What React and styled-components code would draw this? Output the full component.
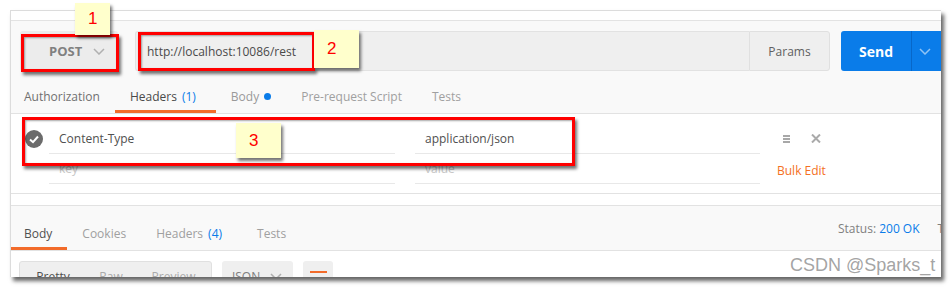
import React from "react";
import styled, { createGlobalStyle } from "styled-components";

const GlobalStyle = createGlobalStyle`
  html, body {
    margin: 0;
    padding: 0;
    background: #fff;
  }
  body {
    font-family: "Open Sans", "Liberation Sans", sans-serif;
  }
`;

const Stage = styled.div`
  position: relative;
  width: 952px;
  height: 288px;
  box-sizing: border-box;
  padding: 10px 0 0 10px;
  background: #fff;
  overflow: hidden;
`;

const Frame = styled.div`
  width: 931px;
  height: 267px;
  box-sizing: border-box;
  border-top: 1px solid #dcdcdc;
  border-left: 1px solid #dcdcdc;
  background: #fff;
  overflow: hidden;
  box-shadow: 3px 4px 4px rgba(0, 0, 0, 0.6);
  display: flex;
  flex-direction: column;
  > * {
    flex-shrink: 0;
  }
`;

const TopStrip = styled.div`
  height: 9px;
  background: #fff;
  border-bottom: 1px solid #e3e3e3;
`;

const RequestArea = styled.div`
  background: #f9f9f9;
  padding-top: 10px;
`;

const Bar = styled.div`
  display: flex;
  height: 40px;
  width: 1000px;
  margin-left: 9px;
`;

const MethodButton = styled.div`
  width: 98px;
  box-sizing: border-box;
  display: flex;
  align-items: center;
  padding-left: 29px;
  background: #ececec;
  border-radius: 3px;
  font-weight: 700;
  font-size: 13px;
  color: #808080;
  svg {
    margin-left: 11px;
  }
`;

const UrlField = styled.div`
  width: 614px;
  margin-left: 17px;
  box-sizing: border-box;
  display: flex;
  align-items: center;
  padding-left: 11px;
  background: #efefef;
  border: 1px solid #e2e2e2;
  border-right: none;
  border-radius: 3px 0 0 3px;
  font-size: 12px;
  color: #4a4a4a;
`;

const ParamsButton = styled.div`
  width: 81px;
  box-sizing: border-box;
  display: flex;
  align-items: center;
  justify-content: center;
  background: #efefef;
  border: 1px solid #e0e0e0;
  border-radius: 0 3px 3px 0;
  font-size: 12px;
  color: #606060;
`;

const SendGroup = styled.div`
  margin-left: 11px;
  display: flex;
  background: #0a7ce9;
  border-radius: 3px;
  width: 110px;
`;

const SendLabel = styled.div`
  width: 70px;
  display: flex;
  align-items: center;
  justify-content: center;
  color: #fff;
  font-weight: 700;
  font-size: 14px;
  border-right: 1px solid #0767c9;
`;

const SendCaret = styled.div`
  display: flex;
  align-items: center;
  padding-left: 7px;
`;

const TabRow = styled.div`
  display: flex;
  height: ${(p) => p.$h}px;
  border-bottom: 1px solid #e2e2e2;
`;

const Tab = styled.div`
  height: 100%;
  box-sizing: border-box;
  display: flex;
  align-items: center;
  gap: 5px;
  padding: ${(p) => p.$pt}px ${(p) => p.$pr || 15}px 0 15px;
  font-size: 12px;
  white-space: nowrap;
  color: ${(p) => p.$color || "#a0a0a0"};
  border-bottom: 3px solid ${(p) => (p.$active ? "#f26b2a" : "transparent")};
  &:first-child {
    padding-left: 13px;
  }
`;

const Count = styled.span`
  color: #0a7ce9;
`;

const Dot = styled.span`
  width: 7px;
  height: 7px;
  border-radius: 50%;
  background: #0a7ce9;
`;

const HeaderTable = styled.div`
  background: #fff;
  padding-bottom: 9px;
  border-bottom: 1px solid #e2e2e2;
`;

const HeaderRow = styled.div`
  display: grid;
  grid-template-columns: 38px 346px 20px 345px 1fr;
  height: ${(p) => p.$h}px;
`;

const CheckCell = styled.div`
  display: flex;
  align-items: flex-end;
  padding: 0 0 6px 14px;
`;

const Cell = styled.div`
  box-sizing: border-box;
  display: flex;
  align-items: flex-end;
  padding: 0 0 6px 10px;
  border-bottom: 1px solid #e8e8e8;
  font-size: 12px;
  line-height: 16px;
  color: ${(p) => (p.$placeholder ? "#c8c8c8" : "#505050")};
`;

const ActionCell = styled.div`
  display: flex;
  align-items: flex-end;
  gap: 21px;
  padding: 0 0 ${(p) => p.$pb}px ${(p) => p.$pl}px;
  font-size: 12px;
  line-height: 16px;
  color: #f47023;
`;

const Divider = styled.div`
  height: 11px;
  background: #fff;
  border-bottom: 1px solid #e2e2e2;
`;

const ResponseHead = styled.div`
  display: flex;
  height: 44px;
  width: 1010px;
  background: #f9f9f9;
  border-bottom: 1px solid #e2e2e2;
`;

const ResponseTabs = styled.div`
  display: flex;
  height: 100%;
`;

const Status = styled.div`
  margin-left: auto;
  display: flex;
  align-items: center;
  gap: 18px;
  padding: 0 16px 0 0;
  font-size: 12px;
  color: #808080;
  white-space: nowrap;
  b {
    font-weight: 400;
    color: #0a7ce9;
  }
`;

const ResponseBody = styled.div`
  background: #fff;
  padding: 10px 0 0 8px;
  display: flex;
  gap: 10px;
`;

const Segmented = styled.div`
  width: 193px;
  height: 30px;
  box-sizing: border-box;
  display: flex;
  align-items: center;
  background: #efefef;
  border: 1px solid #e0e0e0;
  border-radius: 3px;
  font-size: 12px;
`;

const Seg = styled.span`
  width: ${(p) => p.$w}px;
  text-align: center;
  color: ${(p) => (p.$on ? "#505050" : "#aaa")};
`;

const Dropdown = styled.div`
  width: 71px;
  height: 30px;
  box-sizing: border-box;
  display: flex;
  align-items: center;
  gap: 10px;
  padding-left: 10px;
  background: #efefef;
  border-radius: 3px;
  font-size: 12px;
  color: #808080;
`;

const WrapButton = styled.div`
  width: 30px;
  height: 30px;
  display: flex;
  justify-content: center;
  padding-top: 10px;
  box-sizing: border-box;
  background: #efefef;
  border-radius: 3px;
`;

const Mark = styled.div`
  position: absolute;
  left: ${(p) => p.$x}px;
  top: ${(p) => p.$y}px;
  width: ${(p) => p.$w}px;
  height: ${(p) => p.$h}px;
  box-sizing: border-box;
  border: 3px solid #ff0000;
  box-shadow: 2px 3px 3px rgba(0, 0, 0, 0.55), inset 1px 1px 2px rgba(0, 0, 0, 0.35);
`;

const Label = styled.div`
  position: absolute;
  left: ${(p) => p.$x}px;
  top: ${(p) => p.$y}px;
  width: ${(p) => p.$w}px;
  height: ${(p) => p.$h}px;
  box-sizing: border-box;
  display: flex;
  align-items: center;
  padding-left: 13px;
  background: #ffffcc;
  box-shadow: 2px 3px 3px rgba(0, 0, 0, 0.55);
  font-family: "Liberation Sans", Arial, sans-serif;
  font-size: 17px;
  color: #ff0000;
`;

const Watermark = styled.div`
  position: absolute;
  left: 790px;
  top: 254px;
  font-family: "Liberation Sans", Arial, sans-serif;
  font-size: 18px;
  line-height: 22px;
  color: rgba(140, 140, 140, 0.8);
  text-shadow: 0 0 2px #fff;
  white-space: nowrap;
`;

const Chevron = ({ color = "#b0b0b0" }) => (
  <svg width="12" height="7" viewBox="0 0 12 7">
    <polyline points="1,1 6,6 11,1" fill="none" stroke={color} strokeWidth="1.5" />
  </svg>
);

const CheckIcon = () => (
  <svg width="18" height="18" viewBox="0 0 18 18">
    <circle cx="9" cy="9" r="9" fill="#6b6b6b" />
    <polyline points="5,9.5 8,12.2 13,6.5" fill="none" stroke="#fff" strokeWidth="2" />
  </svg>
);

const MenuIcon = () => (
  <svg width="7" height="8" viewBox="0 0 7 8">
    <rect x="0" y="0" width="7" height="2" fill="#a8a8a8" />
    <rect x="0" y="3" width="7" height="2" fill="#a8a8a8" />
    <rect x="0" y="6" width="7" height="2" fill="#a8a8a8" />
  </svg>
);

const CloseIcon = () => (
  <svg width="10" height="9" viewBox="0 0 10 9">
    <path d="M1 0.5 L9 8.5 M9 0.5 L1 8.5" stroke="#aaa" strokeWidth="2" />
  </svg>
);

const WrapIcon = () => (
  <svg width="17" height="14" viewBox="0 0 17 14">
    <path d="M0 1 H17 M0 7 H13 A3 3 0 0 1 13 13 H9 M0 13 H6" fill="none" stroke="#f26b2a" strokeWidth="2" />
  </svg>
);

const App = () => {
  return (
    <>
      <GlobalStyle />
      <Stage>
        <Frame>
          <TopStrip />
          <RequestArea>
            <Bar>
              <MethodButton>
                POST
                <Chevron />
              </MethodButton>
              <UrlField>http://localhost:10086/rest</UrlField>
              <ParamsButton>Params</ParamsButton>
              <SendGroup>
                <SendLabel>Send</SendLabel>
                <SendCaret>
                  <Chevron color="rgba(255,255,255,0.55)" />
                </SendCaret>
              </SendGroup>
            </Bar>
            <TabRow $h={42}>
              <Tab $pt={11} $color="#707070">Authorization</Tab>
              <Tab $pt={11} $pr={20} $color="#4a4a4a" $active>
                Headers <Count>(1)</Count>
              </Tab>
              <Tab $pt={11} $color="#999">
                Body <Dot />
              </Tab>
              <Tab $pt={11}>Pre-request Script</Tab>
              <Tab $pt={11}>Tests</Tab>
            </TabRow>
          </RequestArea>

          <HeaderTable>
            <HeaderRow $h={40}>
              <CheckCell>
                <CheckIcon />
              </CheckCell>
              <Cell>Content-Type</Cell>
              <div />
              <Cell>application/json</Cell>
              <ActionCell $pl={23} $pb={11}>
                <MenuIcon />
                <CloseIcon />
              </ActionCell>
            </HeaderRow>
            <HeaderRow $h={30}>
              <div />
              <Cell $placeholder>key</Cell>
              <div />
              <Cell $placeholder>value</Cell>
              <ActionCell $pl={17} $pb={5}>Bulk Edit</ActionCell>
            </HeaderRow>
          </HeaderTable>
          <Divider />

          <ResponseHead>
            <ResponseTabs>
              <Tab $pt={13} $color="#505050" $active>Body</Tab>
              <Tab $pt={13}>Cookies</Tab>
              <Tab $pt={13} $pr={20}>
                Headers <Count>(4)</Count>
              </Tab>
              <Tab $pt={13}>Tests</Tab>
            </ResponseTabs>
            <Status>
              <span>
                Status: <b>200 OK</b>
              </span>
              <span>
                Time: <b>43 ms</b>
              </span>
            </Status>
          </ResponseHead>
          <ResponseBody>
            <Segmented>
              <Seg $w={66} $on>Pretty</Seg>
              <Seg $w={50}>Raw</Seg>
              <Seg $w={75}>Preview</Seg>
            </Segmented>
            <Dropdown>
              JSON
              <Chevron />
            </Dropdown>
            <WrapButton>
              <WrapIcon />
            </WrapButton>
          </ResponseBody>
        </Frame>

        <Mark $x={21} $y={34} $w={98} $h={38} />
        <Mark $x={138} $y={32} $w={177} $h={39} />
        <Mark $x={22} $y={117} $w={553} $h={49} />
        <Label $x={75} $y={3} $w={35} $h={32}>1</Label>
        <Label $x={314} $y={30} $w={45} $h={38}>2</Label>
        <Label $x={236} $y={123} $w={45} $h={35}>3</Label>
        <Watermark>CSDN @Sparks_t</Watermark>
      </Stage>
    </>
  );
};

export default App;
